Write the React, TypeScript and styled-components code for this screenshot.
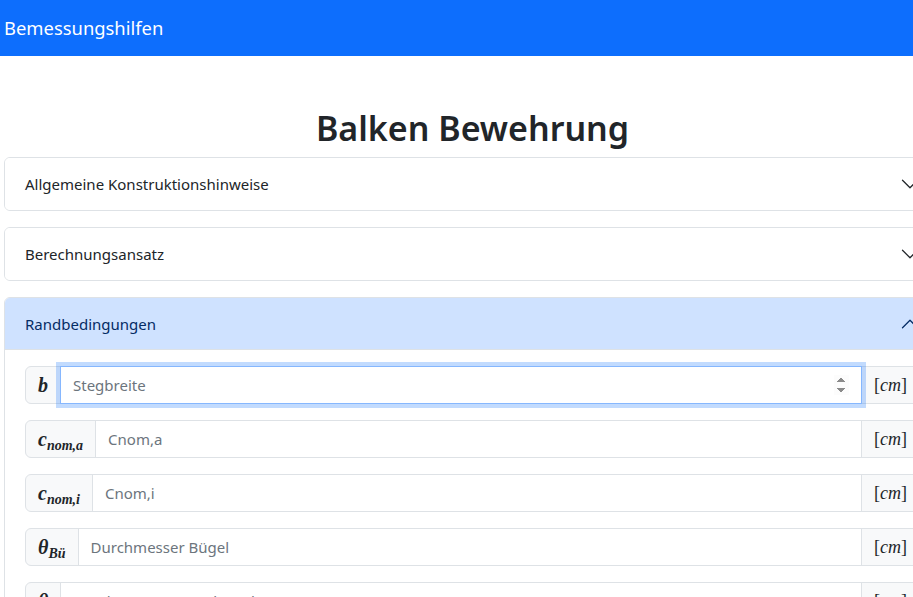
import React from "react";
import styled, { createGlobalStyle } from "styled-components";

const GlobalStyle = createGlobalStyle`
  html, body {
    margin: 0;
    overflow: hidden;
    background: #fff;
  }
  body {
    font-family: "Noto Sans", "Open Sans", sans-serif;
    color: #212529;
  }
  * { box-sizing: border-box; }
`;

const NavBar = styled.nav`
  display: flex;
  align-items: center;
  height: 56px;
  padding: 0 4px;
  background: #0d6efd;
`;

const Brand = styled.span`
  color: #fff;
  font-size: 18.4px;
  line-height: 30px;
`;

const Main = styled.main`
  width: 937px;
  margin-left: 4px;
`;

const Title = styled.h1`
  margin: 52px 0 8px;
  text-align: center;
  font-size: 34px;
  line-height: 41px;
  font-weight: 600;
`;

const Item = styled.div`
  border: 1px solid #dee2e6;
  border-radius: 6px;
  margin-bottom: 16px;
  overflow: hidden;
  background: #fff;
`;

const Header = styled.button<{ $open?: boolean }>`
  display: flex;
  align-items: center;
  width: 100%;
  height: 52px;
  padding: 0 20px;
  border: 0;
  font: inherit;
  font-size: 15px;
  text-align: left;
  cursor: pointer;
  background: ${(p) => (p.$open ? "#cfe2ff" : "#fff")};
  color: ${(p) => (p.$open ? "#052c65" : "#212529")};
  box-shadow: ${(p) => (p.$open ? "inset 0 -1px 0 #dee2e6" : "none")};
`;

const Chevron = styled.svg<{ $open?: boolean }>`
  width: 20px;
  height: 20px;
  margin-left: auto;
  flex-shrink: 0;
  transform: ${(p) => (p.$open ? "rotate(-180deg)" : "none")};
`;

const Body = styled.div`
  padding: 16px 20px;
`;

const Group = styled.div`
  display: flex;
  height: 38px;
  margin-bottom: 16px;
`;

const Addon = styled.span<{ $side: "left" | "right" }>`
  display: flex;
  align-items: center;
  padding: 0 12px;
  background: #f8f9fa;
  border: 1px solid #dee2e6;
  border-radius: ${(p) => (p.$side === "left" ? "6px 0 0 6px" : "0 6px 6px 0")};
  margin-${(p) => (p.$side === "left" ? "right" : "left")}: -1px;
  font-family: "Liberation Serif", "DejaVu Serif", serif;
  font-size: ${(p) => (p.$side === "left" ? "20px" : "18px")};
  color: #212529;
  white-space: nowrap;
`;

const Math = styled.span`
  display: inline-block;
  line-height: 1;
`;

const Mi = styled.i<{ $bold?: boolean }>`
  font-style: italic;
  font-weight: ${(p) => (p.$bold ? 700 : 400)};
`;

const Sub = styled.sub`
  font-size: 14px;
  font-style: italic;
  font-weight: 700;
  vertical-align: -4px;
  line-height: 0;
`;

const Field = styled.input<{ $focus?: boolean }>`
  flex: 1;
  min-width: 0;
  height: 38px;
  padding: 0 12px;
  border: 1px solid ${(p) => (p.$focus ? "#86b7fe" : "#dee2e6")};
  font: inherit;
  font-size: 15px;
  color: #212529;
  outline: none;
  position: relative;
  z-index: ${(p) => (p.$focus ? 2 : 0)};
  box-shadow: ${(p) => (p.$focus ? "0 0 0 4px rgba(13,110,253,.25)" : "none")};
  &::placeholder {
    color: #6c757d;
    opacity: 1;
  }
`;

const ChevronIcon = ({ open }: { open?: boolean }) => (
  <Chevron $open={open} viewBox="0 0 16 16" fill="none"
    stroke={open ? "#052c65" : "#212529"} strokeLinecap="round" strokeLinejoin="round">
    <path d="M2 5L8 11L14 5" />
  </Chevron>
);

const Unit = () => (
  <Addon $side="right">
    <Math>[<Mi>cm</Mi>]</Math>
  </Addon>
);

const rows = [
  { label: <Mi $bold>b</Mi>, placeholder: "Stegbreite", focus: true },
  { label: <><Mi $bold>c</Mi><Sub>nom,a</Sub></>, placeholder: "Cnom,a" },
  { label: <><Mi $bold>c</Mi><Sub>nom,i</Sub></>, placeholder: "Cnom,i" },
  { label: <><Mi $bold>θ</Mi><Sub>Bü</Sub></>, placeholder: "Durchmesser Bügel" },
  { label: <Mi $bold>θ</Mi>, placeholder: "Durchmesser Längsbewehrung" },
];

export default function App() {
  return (
    <>
      <GlobalStyle />
      <NavBar>
        <Brand>Bemessungshilfen</Brand>
      </NavBar>
      <Main>
        <Title>Balken Bewehrung</Title>
        <Item>
          <Header>
            Allgemeine Konstruktionshinweise
            <ChevronIcon />
          </Header>
        </Item>
        <Item>
          <Header>
            Berechnungsansatz
            <ChevronIcon />
          </Header>
        </Item>
        <Item>
          <Header $open>
            Randbedingungen
            <ChevronIcon open />
          </Header>
          <Body>
            {rows.map((r, i) => (
              <Group key={i}>
                <Addon $side="left">
                  <Math>{r.label}</Math>
                </Addon>
                <Field
                  type="number"
                  placeholder={r.placeholder}
                  $focus={r.focus}
                  autoFocus={r.focus}
                />
                <Unit />
              </Group>
            ))}
          </Body>
        </Item>
      </Main>
    </>
  );
}
